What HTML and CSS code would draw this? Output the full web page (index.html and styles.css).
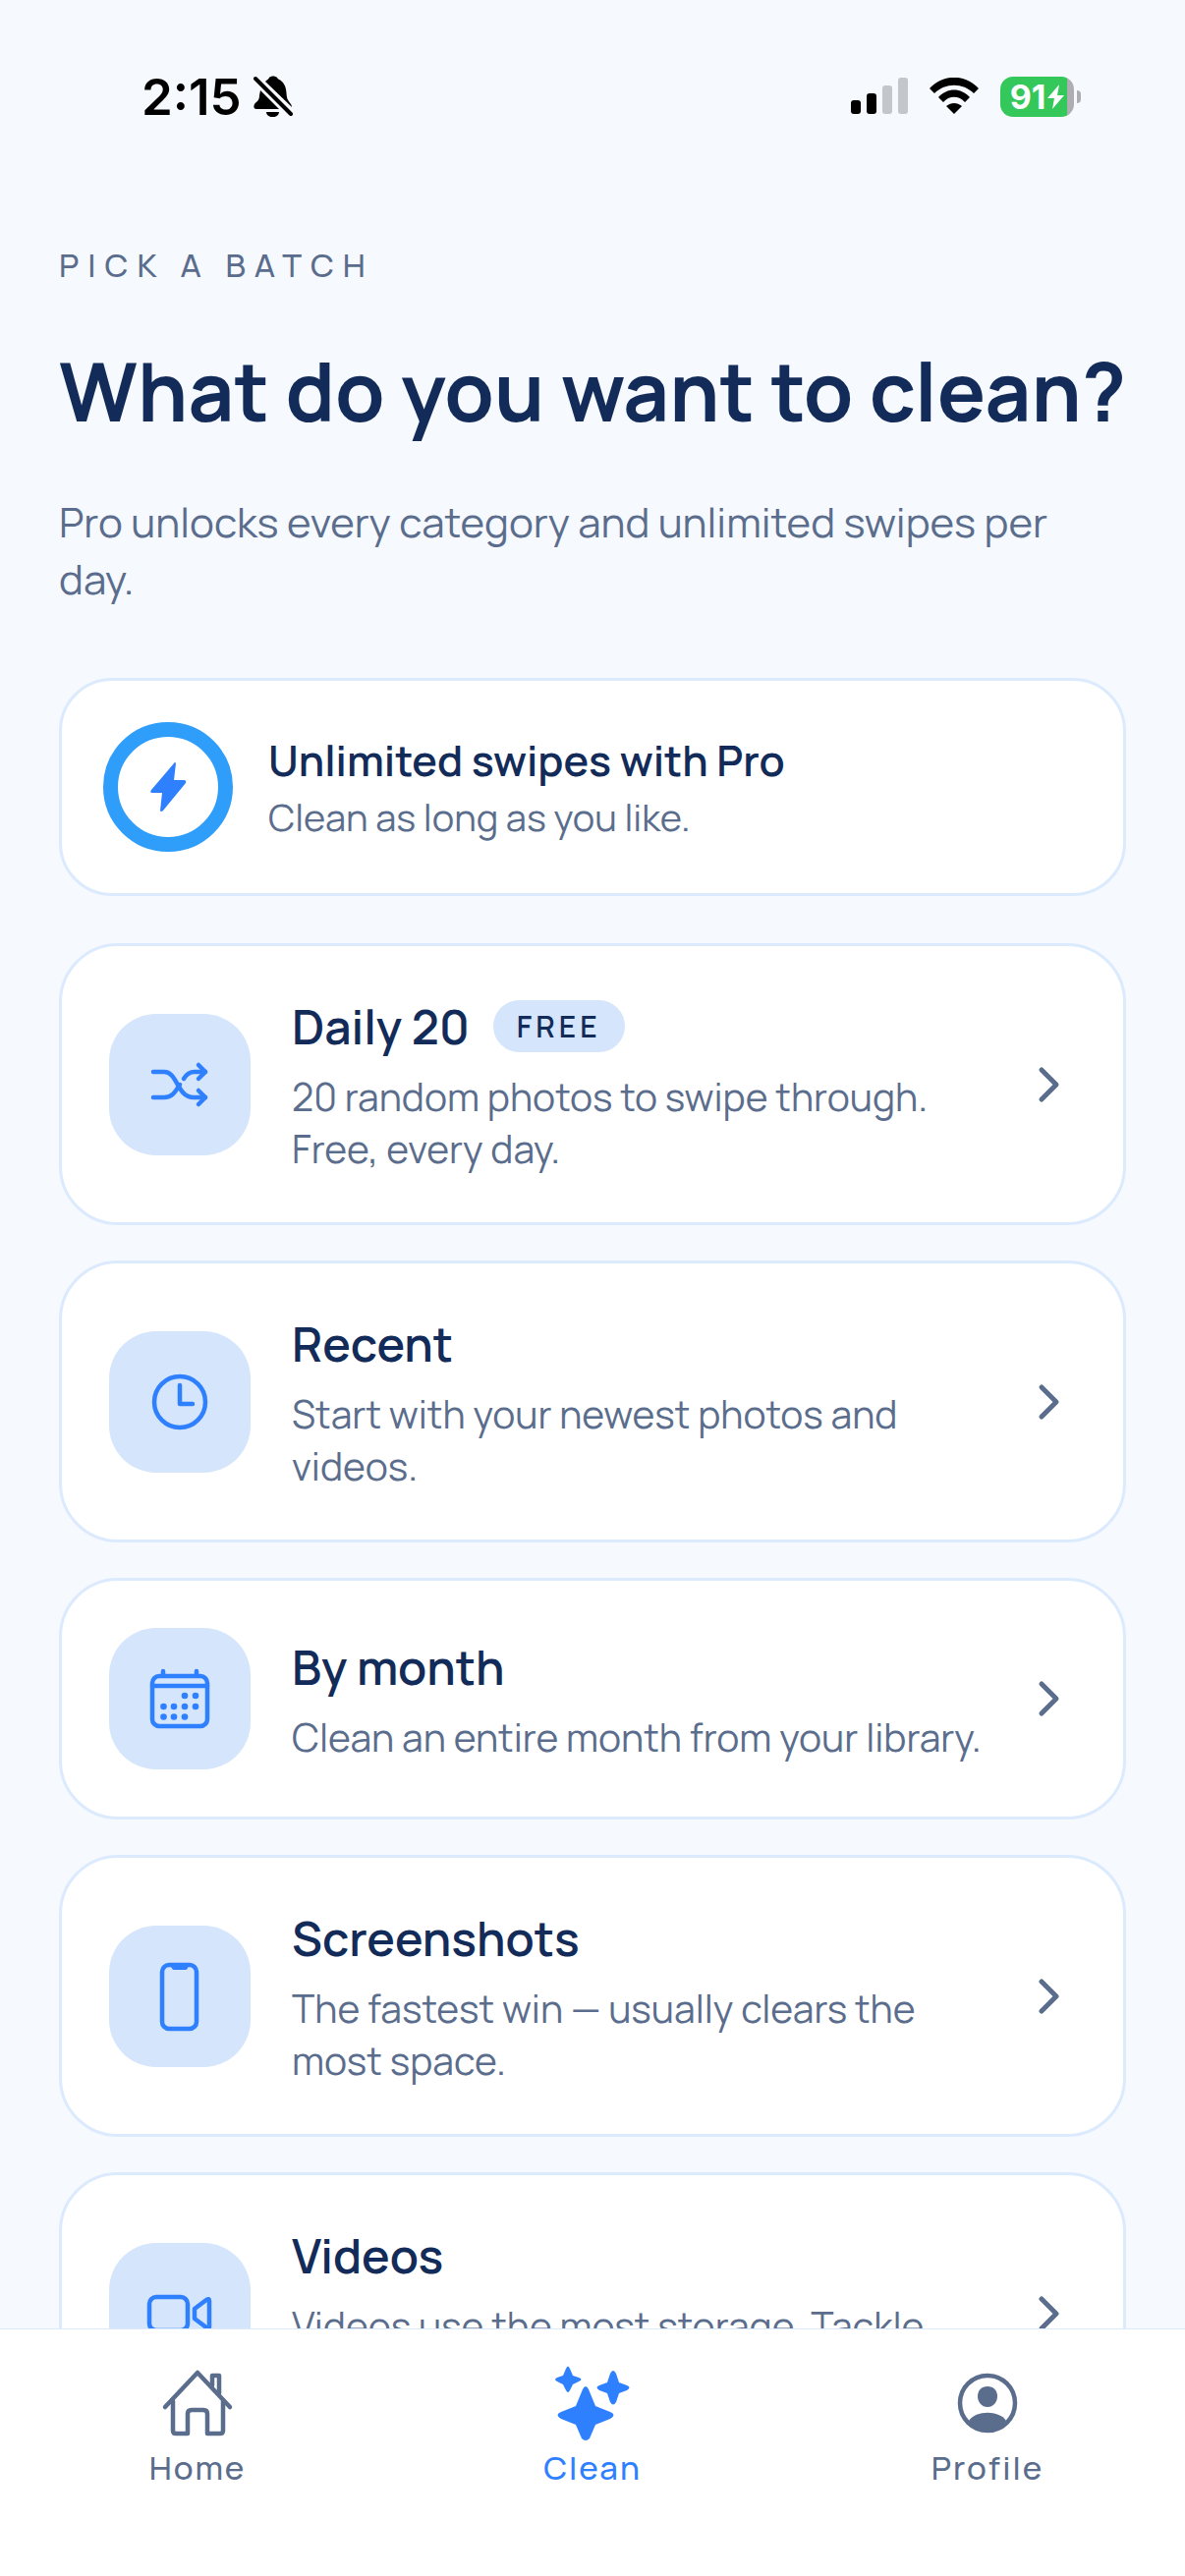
FILE: index.html
```html
<!DOCTYPE html>
<html lang="en">

<head>
    <meta charset="UTF-8">
    <meta name="viewport" content="width=device-width, initial-scale=1.0">
    <title>Clean</title>
    <link rel="stylesheet" href="styles.css">
</head>

<body>
    <!-- Status bar -->
    <div class="status-bar">
        <div class="status-left">
            <span class="time">2:15</span>
            <svg class="bell" viewBox="0 0 40 42">
                <path d="M12 6 C14 4 15 4 16 2 C18 0 22 0 24 2 C25 4 27 4 29 6 C34 11 33 17 34 22 C35 27 39 28 39 32 Z" />
                <path d="M7 15 L26 34 H3 C0 34 0 31 1 29 C3 26 6 26 6 20 Z" />
                <path d="M13 37 H26 C26 44 13 44 13 37 Z" />
                <path class="bell-slash" d="M2 3 L38 39" />
            </svg>
        </div>
        <div class="status-right">
            <svg class="signal" viewBox="0 0 58 38">
                <rect x="0" y="23" width="10" height="14" rx="3" />
                <rect x="16" y="16" width="10" height="21" rx="3" />
                <rect class="dim" x="32" y="8" width="10" height="29" rx="3" />
                <rect class="dim" x="48" y="0" width="10" height="37" rx="3" />
            </svg>
            <svg class="wifi" viewBox="0 0 50 38">
                <path d="M0 11 C14 -4 36 -4 50 11 L45 16 C34 5 16 5 5 16 Z" />
                <path d="M9 20 C18 10 32 10 41 20 L36 25 C30 18 20 18 14 25 Z" />
                <path d="M17 29 C22 25 28 25 33 29 L25 37 Z" />
            </svg>
            <div class="battery">
                <div class="battery-body">
                    <span>91</span>
                    <svg class="battery-bolt" viewBox="0 0 17 25">
                        <path d="M12 0 L0 14 H7 L5 25 L17 11 H10 Z" />
                    </svg>
                </div>
                <div class="battery-tip"></div>
            </div>
        </div>
    </div>

    <main class="content">
        <p class="eyebrow">PICK A BATCH</p>
        <h1>What do you want to clean?</h1>
        <p class="intro">Pro unlocks every category and unlimited swipes per day.</p>

        <a class="card pro-card" href="#pro">
            <span class="ring">
                <svg class="bolt" viewBox="0 0 38 52">
                    <path d="M25 2 L2 29 Q0 32 3 32 H13 L11 50 Q12 52 14 50 L37 22 Q38 19 35 19 H25 L27 2 Q26 0 25 2 Z" />
                </svg>
            </span>
            <span class="pro-text">
                <span class="pro-title">Unlimited swipes with Pro</span>
                <span class="pro-desc">Clean as long as you like.</span>
            </span>
        </a>

        <div class="batch-list">
            <a class="card batch" href="#daily">
                <span class="tile">
                    <svg class="icon" viewBox="0 0 72 72">
                        <path d="M9 23 H20 C34 23 33 49 50 49 H62" />
                        <path d="M9 49 H20 C28 49 31 44 36 36" />
                        <path d="M40 30 C43 25 46 23 51 23 H62" />
                        <path d="M55 16 L62 23 L55 30 M55 42 L62 49 L55 56" />
                    </svg>
                </span>
                <span class="batch-text">
                    <span class="batch-title">Daily 20 <span class="badge">FREE</span></span>
                    <span class="batch-desc">20 random photos to swipe through. Free, every day.</span>
                </span>
                <svg class="chevron" viewBox="0 0 54 54"><path d="M19 12 L34 27 L19 42" /></svg>
            </a>

            <a class="card batch" href="#recent">
                <span class="tile">
                    <svg class="icon" viewBox="0 0 72 72">
                        <circle cx="36" cy="36" r="26" />
                        <path d="M36 19 V38 H49" />
                    </svg>
                </span>
                <span class="batch-text">
                    <span class="batch-title">Recent</span>
                    <span class="batch-desc">Start with your newest photos and videos.</span>
                </span>
                <svg class="chevron" viewBox="0 0 54 54"><path d="M19 12 L34 27 L19 42" /></svg>
            </a>

            <a class="card batch" href="#month">
                <span class="tile">
                    <svg class="icon" viewBox="0 0 72 72">
                        <rect x="8" y="13" width="56" height="51" rx="7" />
                        <path d="M8 23 H64 M19 12 V8 M53 12 V8" />
                        <g class="fill">
                            <circle cx="41" cy="33" r="3.3" />
                            <circle cx="52" cy="33" r="3.3" />
                            <circle cx="19.5" cy="44" r="3.3" />
                            <circle cx="30" cy="44" r="3.3" />
                            <circle cx="41" cy="44" r="3.3" />
                            <circle cx="52" cy="44" r="3.3" />
                            <circle cx="19.5" cy="54.5" r="3.3" />
                            <circle cx="30" cy="54.5" r="3.3" />
                            <circle cx="41" cy="54.5" r="3.3" />
                        </g>
                    </svg>
                </span>
                <span class="batch-text">
                    <span class="batch-title">By month</span>
                    <span class="batch-desc">Clean an entire month from your library.</span>
                </span>
                <svg class="chevron" viewBox="0 0 54 54"><path d="M19 12 L34 27 L19 42" /></svg>
            </a>

            <a class="card batch" href="#screenshots">
                <span class="tile">
                    <svg class="icon" viewBox="0 0 72 72">
                        <rect x="18" y="4" width="35" height="65" rx="7" />
                        <path class="fill" d="M26 4 H45 C44 7 44 9 41 9 H31 C28 9 28 7 26 4 Z" />
                    </svg>
                </span>
                <span class="batch-text">
                    <span class="batch-title">Screenshots</span>
                    <span class="batch-desc">The fastest win — usually clears the most space.</span>
                </span>
                <svg class="chevron" viewBox="0 0 54 54"><path d="M19 12 L34 27 L19 42" /></svg>
            </a>

            <a class="card batch" href="#videos">
                <span class="tile">
                    <svg class="icon" viewBox="0 0 72 72">
                        <rect x="5" y="19" width="39" height="34" rx="7" />
                        <path d="M51 31 L63 22 Q66 20 66 23 V49 Q66 52 63 50 L51 41 Z" />
                    </svg>
                </span>
                <span class="batch-text">
                    <span class="batch-title">Videos</span>
                    <span class="batch-desc">Videos use the most storage. Tackle them first.</span>
                </span>
                <svg class="chevron" viewBox="0 0 54 54"><path d="M19 12 L34 27 L19 42" /></svg>
            </a>
        </div>
    </main>

    <!-- Bottom tabs -->
    <nav class="tab-bar">
        <a class="tab" href="#home">
            <svg class="tab-icon" viewBox="0 0 78 78">
                <g class="line">
                    <path d="M6 43 L39 8 L72 43" />
                    <path d="M14 37 V67 Q14 70 17 70 H29 V50 Q29 46 33 46 H45 Q49 46 49 50 V70 H62 Q65 70 65 67 V37" />
                    <path d="M54 21 V11 H61 V29" />
                </g>
            </svg>
            <span>Home</span>
        </a>
        <a class="tab active" href="#clean">
            <svg class="tab-icon" viewBox="0 0 78 78">
                <path d="M29 25 Q32 19 35 25 L42 42 L57 48 Q64 51 57 55 L42 61 L36 75 Q32 79 28 75 L22 61 L7 55 Q0 51 7 48 L22 42 Z" />
                <path d="M12 4 Q14 -1 16 4 L19 11 L25 13 Q30 15 25 17 L19 20 L16 26 Q14 30 12 26 L9 20 L3 17 Q-1 15 3 13 L9 11 Z" />
                <path d="M57 9 Q60 3 63 9 L66 18 L74 21 Q79 23 74 26 L66 29 L63 38 Q60 43 57 38 L54 29 L46 26 Q41 23 46 21 L54 18 Z" />
            </svg>
            <span>Clean</span>
        </a>
        <a class="tab" href="#profile">
            <svg class="tab-icon" viewBox="0 0 78 78">
                <circle class="line" cx="39" cy="39" r="28" />
                <path d="M39 22 C45 22 49 26 49 32 C49 38 45 43 39 43 C33 43 29 38 29 32 C29 26 33 22 39 22 Z" />
                <path d="M20 57 C27 46 51 46 58 57 C48 71 30 71 20 57 Z" />
            </svg>
            <span>Profile</span>
        </a>
    </nav>
</body>

</html>
```
FILE: styles.css
```css
* {
    box-sizing: border-box;
    margin: 0;
    padding: 0;
}

body {
    font-family: Manrope, Inter, sans-serif;
    background-color: #f6f9fe;
    color: #122b59;
    height: 100vh;
    display: flex;
    flex-direction: column;
}

a {
    color: inherit;
    text-decoration: none;
}

/* Status bar */
.status-bar {
    flex-shrink: 0;
    display: flex;
    justify-content: space-between;
    align-items: center;
    height: 196px;
    padding: 0 106px 0 144px;
    color: #000;
    font-family: Inter, sans-serif;
}

.status-left,
.status-right,
.battery {
    display: flex;
    align-items: center;
}

.status-left {
    gap: 12px;
}

.time {
    font-size: 51px;
    font-weight: 600;
}

.bell {
    width: 40px;
    height: 42px;
}

.bell-slash {
    stroke: #000;
    stroke-width: 4;
    stroke-linecap: round;
}

.status-right {
    gap: 22px;
}

.signal {
    width: 58px;
    height: 38px;
}

.dim {
    fill: #c3c7cb;
}

.wifi {
    width: 50px;
    height: 38px;
}

.battery {
    gap: 3px;
}

.battery-body {
    display: flex;
    align-items: center;
    justify-content: center;
    gap: 2px;
    width: 75px;
    height: 41px;
    border-radius: 13px;
    background: linear-gradient(to right, #34c759 68px, #aeaeb2 68px);
    color: #fff;
    font-size: 34px;
    font-weight: 700;
}

.battery-bolt {
    width: 17px;
    height: 25px;
    fill: #fff;
}

.battery-tip {
    width: 4px;
    height: 13px;
    border-radius: 0 4px 4px 0;
    background-color: #aeaeb2;
}

/* Page content */
.content {
    flex: 1;
    min-height: 0;
    overflow-y: auto;
    scrollbar-width: none;
    padding: 48px 60px;
}

.eyebrow {
    font-size: 33px;
    line-height: 52px;
    font-weight: 500;
    letter-spacing: 9px;
    color: #5b6d8c;
}

h1 {
    margin-top: 52px;
    font-size: 82px;
    line-height: 100px;
    font-weight: 700;
    white-space: nowrap;
}

.intro {
    margin-top: 54px;
    font-size: 42px;
    line-height: 58px;
    font-weight: 400;
    color: #5b6d8c;
}

.card {
    display: flex;
    align-items: center;
    background-color: #fff;
    border: 3px solid #dceafe;
}

.pro-card {
    gap: 36px;
    margin-top: 72px;
    padding: 42px;
    border-radius: 54px;
}

.ring {
    display: flex;
    align-items: center;
    justify-content: center;
    width: 132px;
    height: 132px;
    border: 15px solid #2f9dfa;
    border-radius: 50%;
}

.bolt {
    width: 38px;
    height: 52px;
    fill: #2f80ff;
}

.pro-text,
.batch-text {
    display: flex;
    flex-direction: column;
}

.pro-title {
    font-size: 43px;
    line-height: 60px;
    font-weight: 600;
}

.pro-desc {
    font-size: 38px;
    line-height: 54px;
    font-weight: 400;
    color: #5b6d8c;
}

.batch-list {
    display: flex;
    flex-direction: column;
    gap: 36px;
    margin-top: 48px;
}

.batch {
    gap: 42px;
    padding: 48px;
    border-radius: 60px;
}

.tile {
    flex-shrink: 0;
    display: flex;
    align-items: center;
    justify-content: center;
    width: 144px;
    height: 144px;
    border-radius: 48px;
    background-color: #d5e5fb;
}

.icon {
    width: 72px;
    height: 72px;
    fill: none;
    stroke: #2f80ff;
    stroke-width: 4.5;
    stroke-linecap: round;
    stroke-linejoin: round;
}

.fill {
    fill: #2f80ff;
    stroke: none;
}

.batch-text {
    flex: 1;
    gap: 12px;
}

.batch-title {
    display: flex;
    align-items: center;
    gap: 24px;
    font-size: 48px;
    line-height: 67px;
    font-weight: 600;
}

.badge {
    padding: 0 24px;
    border-radius: 27px;
    background-color: #d5e5fb;
    font-size: 30px;
    line-height: 53px;
    font-weight: 600;
    letter-spacing: 4px;
}

.batch-desc {
    font-size: 39px;
    line-height: 53px;
    font-weight: 400;
    color: #5b6d8c;
}

.chevron {
    flex-shrink: 0;
    width: 54px;
    height: 54px;
    fill: none;
    stroke: #5b6d8c;
    stroke-width: 5;
    stroke-linecap: round;
    stroke-linejoin: round;
}

/* Bottom tabs */
.tab-bar {
    flex-shrink: 0;
    display: grid;
    grid-template-columns: repeat(3, 1fr);
    height: 252px;
    padding-top: 36px;
    border-top: 1px solid #dceafe;
    background-color: #fff;
}

.tab {
    display: flex;
    flex-direction: column;
    align-items: center;
    gap: 5px;
    color: #5b6d8c;
    font-size: 33px;
    line-height: 44px;
    font-weight: 500;
    letter-spacing: 2px;
}

.tab.active {
    color: #2f80ff;
}

.tab-icon {
    width: 78px;
    height: 78px;
    fill: currentColor;
}

.line {
    fill: none;
    stroke: currentColor;
    stroke-width: 4.5;
    stroke-linecap: round;
    stroke-linejoin: round;
}
```
